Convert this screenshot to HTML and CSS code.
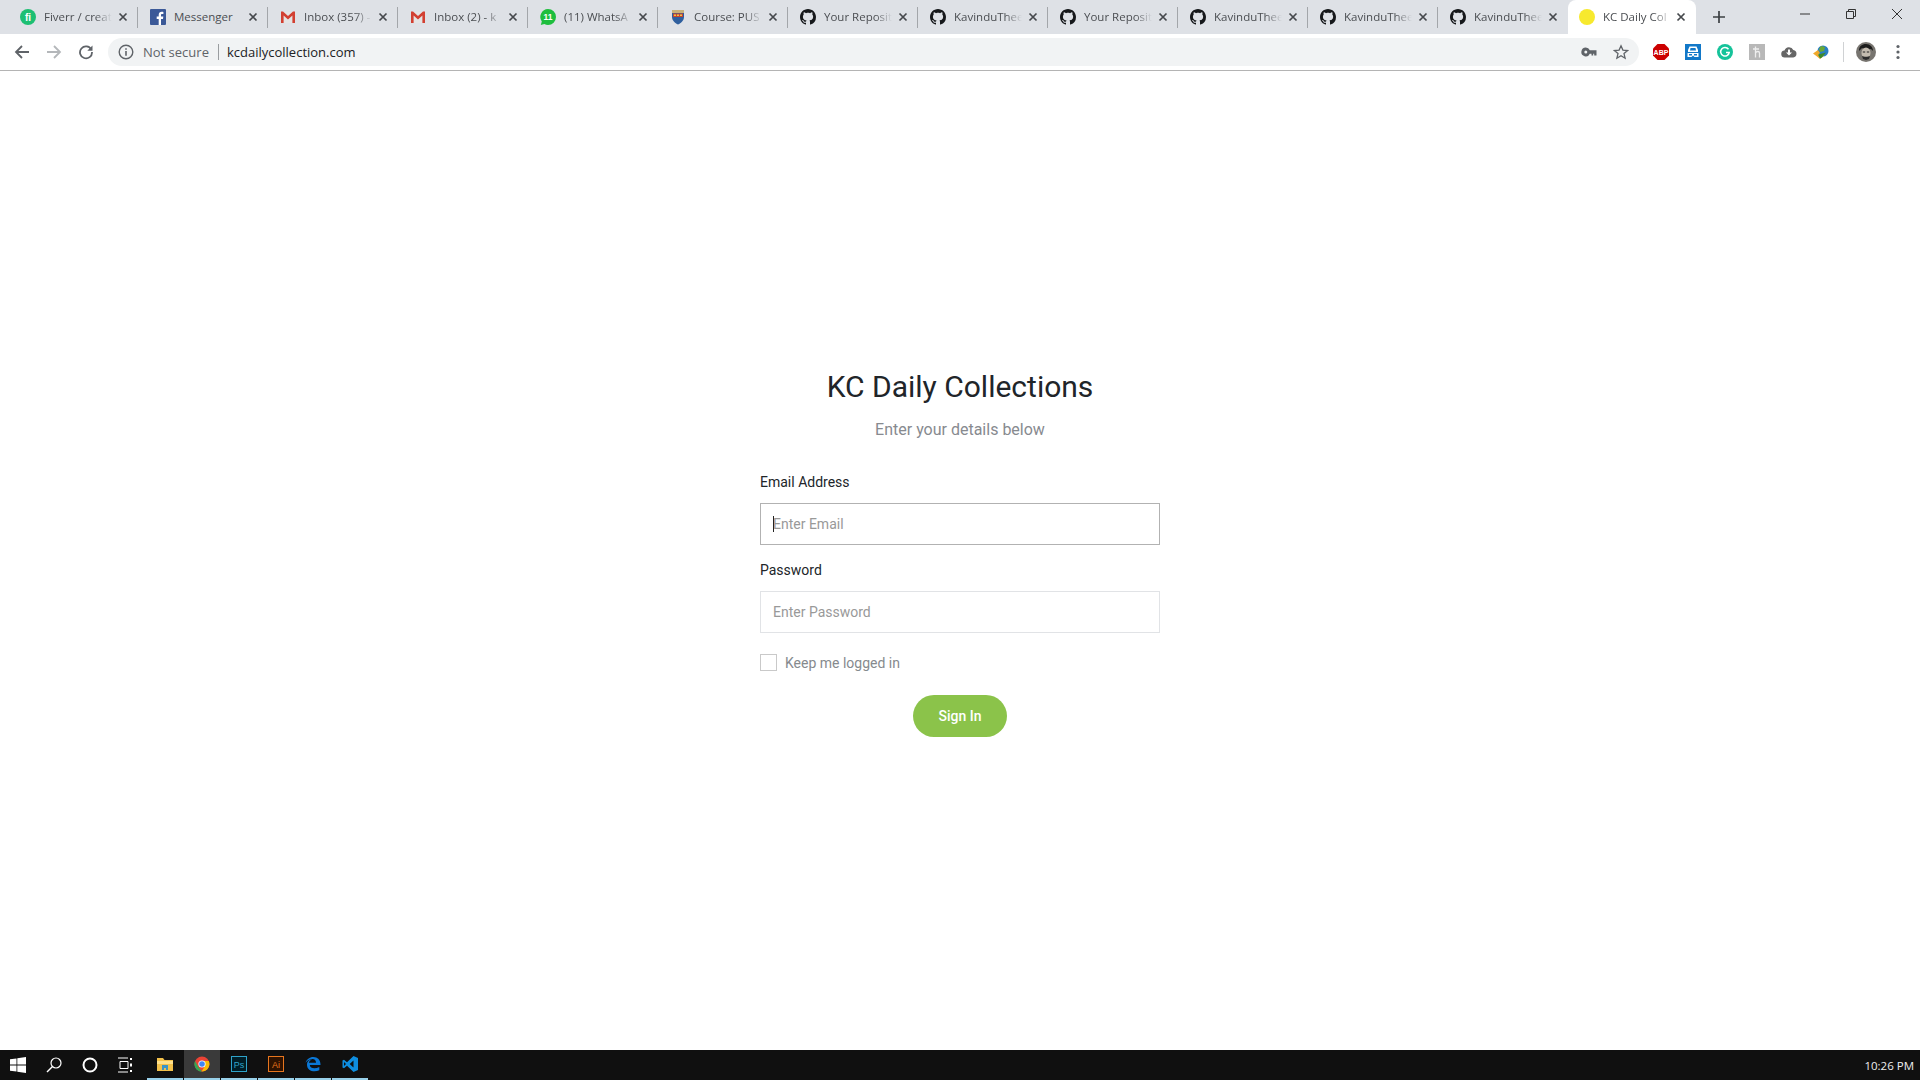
FILE: index.html
```html
<!DOCTYPE html>
<html lang="en">
<head>
  <meta charset="UTF-8">
  <title>KC Daily Collections</title>
  <link rel="stylesheet" href="styles.css">
</head>
<body>
  <svg class="defs" width="0" height="0">
    <symbol id="gh" viewBox="0 0 16 16"><path fill="#16181b" d="M8 0C3.58 0 0 3.58 0 8c0 3.54 2.29 6.53 5.47 7.59.4.07.55-.17.55-.38 0-.19-.01-.82-.01-1.49-2.01.37-2.53-.49-2.69-.94-.09-.23-.48-.94-.82-1.13-.28-.15-.68-.52-.01-.53.63-.01 1.08.58 1.23.82.72 1.21 1.87.87 2.33.66.07-.52.28-.87.51-1.07-1.78-.2-3.64-.89-3.64-3.95 0-.87.31-1.59.82-2.15-.08-.2-.36-1.02.08-2.12 0 0 .67-.21 2.2.82.64-.18 1.32-.27 2-.27.68 0 1.36.09 2 .27 1.53-1.04 2.2-.82 2.2-.82.44 1.1.16 1.92.08 2.12.51.56.82 1.27.82 2.15 0 3.07-1.87 3.75-3.65 3.95.29.25.54.73.54 1.48 0 1.07-.01 1.93-.01 2.2 0 .21.15.46.55.38A8.013 8.013 0 0016 8c0-4.42-3.58-8-8-8z"/></symbol>
    <symbol id="gmail" viewBox="0 0 16 16"><path fill="#e4e4e4" d="M1 3h14v11H1z"/><path fill="#d23f31" d="M1 2.500h2L8 7l5-4.500h2V14h-2.600V6.600L8 10.500 3.600 6.600V14H1z"/></symbol>
    <symbol id="close" viewBox="0 0 10 10"><path d="M1.500 1.500l7 7m0-7l-7 7" stroke="#45484c" stroke-width="1.700" fill="none"/></symbol>
  </svg>

  <header class="browser">
    <div class="tabstrip">
      <div class="tab">
        <svg class="favicon" viewBox="0 0 16 16"><circle cx="8" cy="8" r="8" fill="#1dbf73"/><text x="8" y="11.500" class="fav-text" font-size="10">fi</text></svg>
        <span class="tab-title">Fiverr / creat</span>
        <svg class="tab-close"><use href="#close"/></svg>
      </div>
      <div class="tab">
        <svg class="favicon" viewBox="0 0 16 16"><rect width="16" height="16" rx="1" fill="#3b5998"/><path fill="#fff" d="M11 16v-6h2l.3-2.400H11V6.200c0-.7.2-1.200 1.200-1.200h1.200V2.900C13.200 2.900 12.500 2.800 11.700 2.800 10 2.800 8.700 3.900 8.700 5.900v1.700H6.700V10h2v6z"/></svg>
        <span class="tab-title no-fade">Messenger</span>
        <svg class="tab-close"><use href="#close"/></svg>
      </div>
      <div class="tab">
        <svg class="favicon"><use href="#gmail"/></svg>
        <span class="tab-title">Inbox (357) -</span>
        <svg class="tab-close"><use href="#close"/></svg>
      </div>
      <div class="tab">
        <svg class="favicon"><use href="#gmail"/></svg>
        <span class="tab-title">Inbox (2) - k</span>
        <svg class="tab-close"><use href="#close"/></svg>
      </div>
      <div class="tab">
        <svg class="favicon" viewBox="0 0 16 16"><path fill="#1ebe3e" d="M8 0a8 8 0 0 1 0 16c-1.300 0-2.500-.3-3.600-.9L.8 16l1-3.400A8 8 0 0 1 8 0z"/><text x="8" y="11" class="fav-text" font-size="8.500">11</text></svg>
        <span class="tab-title">(11) WhatsA</span>
        <svg class="tab-close"><use href="#close"/></svg>
      </div>
      <div class="tab">
        <svg class="favicon" viewBox="0 0 16 16"><path fill="#2f5f9e" d="M2 1h12v7c0 3.500-3 6-6 7.500C5 14 2 11.500 2 8z"/><path fill="#c9b27a" d="M2 1h12v3H2z"/><path fill="#c8452f" d="M3 4.500h10v3.500H3z"/><path fill="#e8c547" d="M4 5.500h2v1.500H4zm3 0h2v1.500H7zm3 0h2v1.500h-2z"/></svg>
        <span class="tab-title">Course: PUS</span>
        <svg class="tab-close"><use href="#close"/></svg>
      </div>
      <div class="tab">
        <svg class="favicon"><use href="#gh"/></svg>
        <span class="tab-title">Your Reposit</span>
        <svg class="tab-close"><use href="#close"/></svg>
      </div>
      <div class="tab">
        <svg class="favicon"><use href="#gh"/></svg>
        <span class="tab-title">KavinduThee</span>
        <svg class="tab-close"><use href="#close"/></svg>
      </div>
      <div class="tab">
        <svg class="favicon"><use href="#gh"/></svg>
        <span class="tab-title">Your Reposit</span>
        <svg class="tab-close"><use href="#close"/></svg>
      </div>
      <div class="tab">
        <svg class="favicon"><use href="#gh"/></svg>
        <span class="tab-title">KavinduThee</span>
        <svg class="tab-close"><use href="#close"/></svg>
      </div>
      <div class="tab">
        <svg class="favicon"><use href="#gh"/></svg>
        <span class="tab-title">KavinduThee</span>
        <svg class="tab-close"><use href="#close"/></svg>
      </div>
      <div class="tab no-sep">
        <svg class="favicon"><use href="#gh"/></svg>
        <span class="tab-title">KavinduThee</span>
        <svg class="tab-close"><use href="#close"/></svg>
      </div>
      <div class="tab active">
        <svg class="favicon" viewBox="0 0 16 16"><circle cx="8" cy="8" r="8" fill="#f7e92e"/></svg>
        <span class="tab-title">KC Daily Col</span>
        <svg class="tab-close"><use href="#close"/></svg>
      </div>
      <svg class="new-tab" viewBox="0 0 12 12"><path d="M6 0v12M0 6h12" stroke="#3c4043" stroke-width="1.700"/></svg>
      <div class="win-controls">
        <div class="win-btn"><svg width="10" height="10" viewBox="0 0 10 10"><path d="M0 5h10" stroke="#333" stroke-width="1"/></svg></div>
        <div class="win-btn"><svg width="10" height="10" viewBox="0 0 10 10"><path d="M.5 2.500h7v7h-7zM2.500 2.500v-2h7v7h-2" stroke="#333" fill="none"/></svg></div>
        <div class="win-btn"><svg width="10" height="10" viewBox="0 0 10 10"><path d="M0 0l10 10M10 0L0 10" stroke="#333" stroke-width="1"/></svg></div>
      </div>
    </div>

    <div class="toolbar">
      <div class="slot"><svg width="16" height="16" viewBox="0 0 16 16"><path d="M15 8H2M8 2L2 8l6 6" stroke="#5f6368" stroke-width="1.800" fill="none"/></svg></div>
      <div class="slot"><svg width="16" height="16" viewBox="0 0 16 16"><path d="M1 8h13M8 2l6 6-6 6" stroke="#b4b7ba" stroke-width="1.800" fill="none"/></svg></div>
      <div class="slot"><svg width="16" height="16" viewBox="0 0 16 16"><path d="M13.300 5.500A6 6 0 1 0 14 8" stroke="#5f6368" stroke-width="1.800" fill="none"/><path d="M14.500 1.500v5.200H9.300z" fill="#5f6368"/></svg></div>
      <div class="omnibox">
        <svg class="info" viewBox="0 0 16 16"><circle cx="8" cy="8" r="6.800" stroke="#5f6368" stroke-width="1.400" fill="none"/><path d="M7.200 7h1.600v4.800H7.200zM7.200 4.200h1.600v1.600H7.200z" fill="#5f6368"/></svg>
        <span class="not-secure">Not secure</span>
        <span class="omni-sep"></span>
        <span class="url">kcdailycollection.com</span>
        <div class="omni-actions">
          <div class="slot"><svg width="16" height="16" viewBox="0 0 16 16"><path d="M4.800 3.600a4.400 4.400 0 1 0 4 6.100h1.700v1.900h1.700V9.700h1v1.900H15.500V6.300H8.800a4.400 4.400 0 0 0-4-2.700zm0 2.900a1.500 1.500 0 1 1 0 3 1.500 1.500 0 0 1 0-3z" fill="#5f6368"/></svg></div>
          <div class="slot"><svg width="16" height="16" viewBox="0 0 16 16"><path d="M8 1.800l1.900 4.300 4.700.4-3.600 3.100 1.100 4.600L8 11.800l-4.100 2.400L5 9.600 1.400 6.500l4.700-.4z" stroke="#5f6368" stroke-width="1.300" fill="none"/></svg></div>
        </div>
      </div>
      <div class="extensions">
        <div class="slot"><svg width="18" height="18" viewBox="0 0 18 18"><path fill="#c00" d="M5.500 1h7L17 5.500v7L12.500 17h-7L1 12.500v-7z"/><text x="9" y="11.600" class="fav-text" font-size="7">ABP</text></svg></div>
        <div class="slot"><svg width="16" height="16" viewBox="0 0 16 16"><rect width="16" height="16" fill="#1278c8"/><path fill="#fff" d="M4.500 2.500h7L13 6v2H3V6zM2.500 9h11v4h-4l-1.500-1.500L6.500 13h-4z"/><path fill="#1278c8" d="M5.500 4h5l.5 2.500H5zM4 10h3v1.500H4zm5 0h3v1.500H9z"/></svg></div>
        <div class="slot"><svg width="16" height="16" viewBox="0 0 16 16"><circle cx="8" cy="8" r="8" fill="#15c39a"/><path d="M11.500 5.300A4.300 4.300 0 1 0 12.200 8.500H9" stroke="#fff" stroke-width="1.500" fill="none"/></svg></div>
        <div class="slot"><svg width="16" height="16" viewBox="0 0 16 16"><rect width="16" height="16" fill="#b8b8b8"/><path d="M6.500 2.500v11M6.500 9c1-2 4-2 4 0v4.500M4 5h6" stroke="#eee" stroke-width="1.300" fill="none"/></svg></div>
        <div class="slot"><svg width="16" height="16" viewBox="0 0 16 16"><path fill="#666" d="M4 13.500a3.500 3.500 0 0 1-.5-7A4.700 4.700 0 0 1 12.300 6a3.800 3.800 0 0 1 0 7.500z"/><path fill="#fff" d="M7 5.500h2v3h2l-3 3-3-3h2z"/></svg></div>
        <div class="slot"><svg width="16" height="16" viewBox="0 0 16 16"><circle cx="10" cy="7" r="5.500" fill="#2a7fc4"/><path fill="#6aa834" d="M8 2l4 1-1 4-4 1-1-3z"/><path fill="#f0a92b" d="M0 9.500L5 6l2 3-2 1.500 6 1-4 3.500-3-2.500z"/><path fill="#3d8a2e" d="M5 10.500l8-2-4 5-2 1z"/></svg></div>
        <span class="ext-sep"></span>
        <div class="slot"><svg width="20" height="20" viewBox="0 0 20 20"><circle cx="10" cy="10" r="10" fill="#77746f"/><path fill="#1c1c1c" d="M3 9c0-5 3-7 7-7s7 3 7 7l-2-2c-3 1-7 0-9-1z"/><ellipse cx="10" cy="11" rx="4.500" ry="5.500" fill="#c4bcb0"/><path fill="#2c2c2c" d="M6 14c2 1 6 1 8 0l-1 3-3 1-3-1z"/><path fill="#222" d="M6.800 9.500h2.400v1H6.800zm4 0h2.400v1h-2.400z"/></svg></div>
        <div class="slot"><svg width="4" height="16" viewBox="0 0 4 16"><circle cx="2" cy="2.500" r="1.600" fill="#5f6368"/><circle cx="2" cy="8" r="1.600" fill="#5f6368"/><circle cx="2" cy="13.500" r="1.600" fill="#5f6368"/></svg></div>
      </div>
    </div>
  </header>

  <main class="page">
    <form class="login">
      <h1>KC Daily Collections</h1>
      <p class="subtitle">Enter your details below</p>

      <label class="field-label" for="email">Email Address</label>
      <div class="input-wrap">
        <input class="text-input focused" id="email" type="email" placeholder="Enter Email">
        <span class="caret"></span>
      </div>

      <label class="field-label" for="password">Password</label>
      <div class="input-wrap">
        <input class="text-input" id="password" type="password" placeholder="Enter Password">
      </div>

      <label class="keep">
        <input class="checkbox" type="checkbox">
        <span class="keep-text">Keep me logged in</span>
      </label>

      <div class="actions"><button type="button" class="signin">Sign In</button></div>
    </form>
  </main>

  <footer class="taskbar">
    <div class="task"><svg width="16" height="16" viewBox="0 0 16 16"><path fill="#fff" d="M0 2.300l6.500-.9v6.200H0zM7.300 1.300L16 0v7.600H7.300zM0 8.400h6.500v6.200L0 13.700zM7.300 8.400H16V16l-8.700-1.200z"/></svg></div>
    <div class="task"><svg width="16" height="16" viewBox="0 0 16 16"><circle cx="10" cy="6" r="5" stroke="#fff" stroke-width="1.200" fill="none"/><path d="M6.500 9.500L1 15" stroke="#fff" stroke-width="1.400"/></svg></div>
    <div class="task"><svg width="16" height="16" viewBox="0 0 16 16"><circle cx="8" cy="8" r="6.500" stroke="#fff" stroke-width="2" fill="none"/></svg></div>
    <div class="task"><svg width="16" height="16" viewBox="0 0 16 16"><path d="M0 1h10M0 15h10M2 4.500h8v7H2z" stroke="#fff" fill="none"/><path d="M13 1v2M13 6.500v3M13 13v2" stroke="#fff" stroke-width="2"/></svg></div>
    <div class="task-apps">
      <div class="task app"><svg width="16" height="16" viewBox="0 0 16 16"><path fill="#f3c14b" d="M0 2h6l1.500 2H16v11H0z"/><path fill="#ffe08a" d="M0 5h16v3H0z"/><path fill="#3a94c8" d="M5 9h6v5H9v-2H7v2H5z"/></svg></div>
      <div class="task app current"><svg width="16" height="16" viewBox="0 0 16 16"><circle cx="8" cy="8" r="7.500" fill="#ea4335"/><path fill="#34a853" d="M1 5l3.700 6.600L8 15.500A7.500 7.500 0 0 1 1 5z"/><path fill="#fbbc05" d="M8 5h6.800A7.500 7.500 0 0 1 7.500 15.500L11 10z"/><circle cx="8" cy="8" r="3.600" fill="#fff"/><circle cx="8" cy="8" r="2.800" fill="#4285f4"/></svg></div>
      <div class="task app"><svg width="16" height="16" viewBox="0 0 16 16"><rect x=".5" y=".5" width="15" height="15" fill="#001d26" stroke="#2fa3c9"/><text x="8" y="11.500" class="app-text ps" font-size="9">Ps</text></svg></div>
      <div class="task app"><svg width="16" height="16" viewBox="0 0 16 16"><rect x=".5" y=".5" width="15" height="15" fill="#2e1200" stroke="#e8761e"/><text x="8" y="11.500" class="app-text ai" font-size="9">Ai</text></svg></div>
      <div class="task app"><svg width="16" height="16" viewBox="0 0 16 16"><path fill="#0a78d7" d="M8.300 1C12.800 1 15.600 4 15.500 9H4.800c.2 3.500 5.200 4.200 9.500 2v3.300c-5 2.300-12.300.9-12.300-5.600C2 4.500 5.500 3.500 7 3.500 4.500 4.500 4 6 4 6.800h7C11 4.500 9.800 3 7.200 3 5 3 2.500 4.200.6 6.800 1.500 3.500 4.500 1 8.300 1z"/></svg></div>
      <div class="task app"><svg width="16" height="16" viewBox="0 0 16 16"><path fill="#0e8ee0" d="M11.500 0L16 2v12l-4.500 2L5 9.800 2 12.200.5 11.400V4.600L2 3.800l3 2.400z"/><path fill="#0f0f0f" d="M11.500 4.500L7.700 8l3.800 3.500zM2 6v4l2-2z"/></svg></div>
    </div>
    <span class="clock">10:26 PM</span>
  </footer>
</body>
</html>
```

FILE: styles.css
```css
* { box-sizing: border-box; }
html, body { height: 100%; }
body { margin: 0; display: flex; flex-direction: column; height: 1080px; overflow: hidden; background: #fff; font-family: "Roboto", sans-serif; }
.defs { position: absolute; }

/* browser chrome */
.browser { font-family: "Open Sans", "Noto Sans", sans-serif; }
.tabstrip { display: flex; align-items: center; height: 34px; padding-left: 8px; background: #dee1e6; }
.tab { position: relative; display: flex; align-items: center; flex: none; width: 130px; height: 34px; padding-left: 12px; }
.tab::after { content: ""; position: absolute; right: 0; top: 7px; width: 1px; height: 21px; background: #a3a6aa; }
.tab.no-sep::after, .tab.active::after { display: none; }
.tab.active { width: 128px; padding-left: 11px; background: #fff; border-radius: 8px 8px 0 0; }
.tab.active .tab-close { margin-left: 5px; }
.favicon { flex: none; width: 16px; height: 16px; }
.fav-text { fill: #fff; font-family: "Liberation Sans", sans-serif; font-weight: bold; text-anchor: middle; }
.tab-title {
  flex: none;
  width: 68px;
  margin: 0 0 1px 8px;
  overflow: hidden;
  white-space: nowrap;
  font-size: 11.5px;
  color: #4b4e52;
  -webkit-mask-image: linear-gradient(to right, #000 75%, transparent 100%);
}
.tab-title.no-fade { -webkit-mask-image: none; }
.tab-close { flex: none; width: 10px; height: 10px; margin-left: 6px; }
.new-tab { flex: none; width: 12px; height: 12px; margin-left: 17px; }
.win-controls { display: flex; margin-left: auto; margin-top: -6px; }
.win-btn { display: flex; align-items: center; justify-content: center; width: 46px; height: 28px; }

.toolbar { display: flex; align-items: center; height: 37px; padding: 0 6px 1px; background: #fff; border-bottom: 1px solid #b4b4b4; }
.slot { display: flex; align-items: center; justify-content: center; flex: none; width: 32px; height: 28px; }
.omnibox { display: flex; align-items: center; flex: 1; height: 28px; margin-left: 6px; padding: 0 2px 0 10px; background: #f1f3f4; border-radius: 14px; font-size: 13px; }
.info { flex: none; width: 16px; height: 16px; }
.not-secure { margin-left: 9px; color: #5f6368; }
.omni-sep { width: 1px; height: 16px; margin: 0 8px 0 9px; background: #9a9da0; }
.url { color: #202124; }
.omni-actions { display: flex; margin-left: auto; }
.extensions { display: flex; align-items: center; margin-left: 6px; }
.ext-sep { width: 1px; height: 20px; margin: 0 6px; background: #d0d2d4; }

/* login form */
.page { flex: 1; display: flex; justify-content: center; background: #fff; }
.login { width: 400px; padding-top: 298px; }
h1 { margin: 0; font-size: 30px; font-weight: 400; line-height: 36px; color: #212529; text-align: center; }
.subtitle { margin: 13px 0 0; font-size: 16px; line-height: 24px; color: #878a8f; text-align: center; }
.field-label { display: block; margin-bottom: 10px; font-size: 14px; line-height: 21px; color: #212529; }
.subtitle + .field-label { margin-top: 30px; }
.input-wrap { position: relative; }
.text-input { display: block; width: 100%; height: 42px; padding: 0 12px; background: #fff; border: 1px solid #e1e3e6; border-radius: 0; outline: 0; font: 14px "Roboto", sans-serif; color: #495057; caret-color: transparent; }
.text-input::placeholder { color: #999; opacity: 1; }
.text-input.focused { border-color: #b2b2b2; }
.caret { position: absolute; left: 13px; top: 13px; width: 1px; height: 16px; background: #222; }
.input-wrap + .field-label { margin-top: 15px; }
.keep { display: flex; align-items: flex-start; gap: 8px; margin-top: 21px; font-size: 14px; line-height: 17px; color: #868a8e; }
.checkbox { flex: none; width: 17px; height: 17px; margin: 0; background: #fff; border: 1px solid #c9c9c9; appearance: none; }
.keep-text { padding-top: 1px; }
.actions { display: flex; justify-content: center; margin-top: 23px; }
.signin { width: 94px; height: 42px; border: 0; border-radius: 21px; background: #8bc34a; color: #fff; font: 500 14px "Roboto", sans-serif; }

/* windows taskbar */
.taskbar { display: flex; align-items: stretch; flex: none; height: 30px; background: #101010; }
.task { display: flex; align-items: center; justify-content: center; flex: none; width: 36px; height: 30px; }
.task-apps { display: flex; gap: 1px; margin-left: 3px; }
.app { border-bottom: 2px solid #99d1ea; }
.app.current { background: #3a3a3a; }
.app-text { font-family: "Liberation Sans", sans-serif; text-anchor: middle; }
.ps { fill: #2fa3c9; }
.ai { fill: #e8761e; }
.clock { margin-left: auto; padding-right: 6px; align-self: center; font: 11.5px "Open Sans", "Noto Sans", sans-serif; color: #eee; }
```
